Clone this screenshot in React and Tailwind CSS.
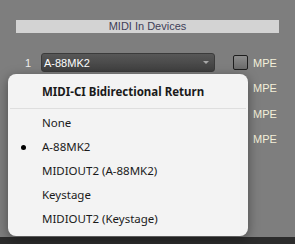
import React from "react";

const tah = { fontFamily: '"Liberation Sans", Arial, sans-serif' };
const seg = { fontFamily: '"Noto Sans", "Open Sans", sans-serif' };

function Row({ n, first }) {
  return (
    <div className="h-[25.5px] flex items-center text-[11px]" style={tah}>
      <div className="w-[25px]" />
      <div className="w-[16px] text-[#eeeeee]">{first ? n : ""}</div>
      <div className="w-[174px] h-[19px] rounded-[3px] border border-[#3b3b3b] bg-gradient-to-b from-[#575757] to-[#404040] flex items-center px-[2px] text-white">
        <span className="flex-1">{first ? "A-88MK2" : ""}</span>
        <span className="mr-[3px] w-0 h-0 border-l-[3px] border-r-[3px] border-t-[3px] border-l-transparent border-r-transparent border-t-[#a8a8a8]" />
      </div>
      <div className="w-[18px]" />
      <div className="w-[15px] h-[15px] rounded-[2px] border border-[#1e1e1e] bg-gradient-to-b from-[#8c8c8c] to-[#6c6c6c]" />
      <div className="ml-[5px] text-[#f4f0da]">MPE</div>
    </div>
  );
}

export default function App() {
  const items = ["None", "A-88MK2", "MIDIOUT2 (A-88MK2)", "Keystage", "MIDIOUT2 (Keystage)"];
  return (
    <div className="w-[295px] h-[244px] bg-[#7e7e7e] relative overflow-hidden flex flex-col">
      <div className="flex-1 flex flex-col">
        <div className="mt-[20px] mx-[16px] h-[13px] bg-[#d3d3d3] flex items-center justify-center text-[11px] text-[#3e3e58] leading-none" style={tah}>
          MIDI In Devices
        </div>
        <div className="mt-[17px] flex flex-col">
          <Row n="1" first />
          <Row n="2" />
          <Row n="3" />
          <Row n="4" />
        </div>
      </div>
      <div className="h-[7px] bg-[#2c2c2c]" />

      <div
        className="absolute left-[8px] top-[74px] w-[240px] h-[162px] rounded-[8px] bg-[#f3f3f3] shadow-[0_3px_12px_rgba(0,0,0,0.4)] pt-[6px] text-[11.5px] text-[#1a1a1a]"
        style={seg}
      >
        <div className="h-[24px] flex items-center pl-[34px] font-bold">MIDI-CI Bidirectional Return</div>
        <div className="mt-[4px] mx-[2px] h-px bg-[#dedede]" />
        <div className="mt-[2px] flex flex-col">
          {items.map((t, i) => (
            <div key={i} className="h-[24px] flex items-center relative pl-[34px]">
              {i === 1 && <span className="absolute left-[13px] top-[10px] w-[5px] h-[5px] rounded-full bg-black" />}
              {t}
            </div>
          ))}
        </div>
      </div>
    </div>
  );
}
